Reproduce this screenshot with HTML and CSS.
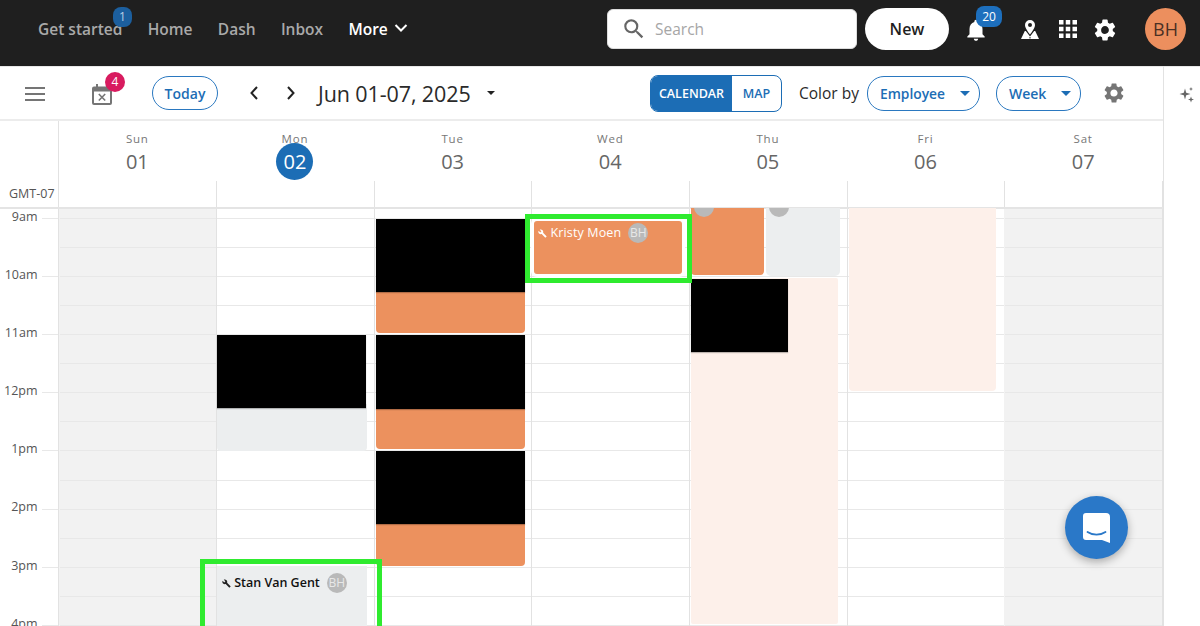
FILE: index.html
```html
<!DOCTYPE html>
<html lang="en">
<head>
<meta charset="utf-8">
<title>Calendar</title>
<link rel="stylesheet" href="styles.css">
</head>
<body>
<div class="app">
  <header class="topbar">
    <nav class="nav">
      <a class="nav-link first">Get started<span class="nav-badge">1</span></a>
      <a class="nav-link">Home</a>
      <a class="nav-link">Dash</a>
      <a class="nav-link">Inbox</a>
      <a class="nav-link more">More
        <svg class="more-chev" viewBox="0 0 14 10"><path d="M1.5 2 7 7.5 12.5 2" fill="none" stroke="#fff" stroke-width="2"/></svg>
      </a>
    </nav>
    <div class="top-right">
      <div class="search">
        <svg class="search-icon" viewBox="0 0 24 24"><path fill="#666" d="M15.5 14h-.79l-.28-.27A6.47 6.47 0 0 0 16 9.5 6.5 6.5 0 1 0 9.5 16c1.61 0 3.09-.59 4.23-1.57l.27.28v.79l5 4.99L20.49 19l-4.99-5zm-6 0C7.01 14 5 11.99 5 9.5S7.01 5 9.5 5 14 7.01 14 9.5 11.99 14 9.5 14z"/></svg>
        <span class="search-text">Search</span>
      </div>
      <button class="new-btn">New</button>
      <div class="bell">
        <svg class="bell-icon" viewBox="0 0 24 24"><path fill="#fff" d="M12 22c1.1 0 2-.9 2-2h-4c0 1.1.9 2 2 2zm6-6v-5c0-3.07-1.63-5.64-4.5-6.32V4c0-.83-.67-1.5-1.5-1.5s-1.5.67-1.5 1.500v.68C7.64 5.36 6 7.92 6 11v5l-2 2v1h16v-1l-2-2z"/></svg>
        <span class="bell-badge">20</span>
      </div>
      <svg class="pin-icon" viewBox="0 0 18 19"><path fill="#fff" fill-rule="evenodd" d="M9 0a5 5 0 0 0-5 5C4 8.500 9 14.500 9 14.500S14 8.500 14 5A5 5 0 0 0 9 0zm0 3a2 2 0 1 1 0 4 2 2 0 0 1 0-4z"/><path fill="#fff" d="M3.800 11 0 19h18l-3.800-8h-1L9 16.500 4.800 11z"/><path d="M9 17V19" stroke="#1f1f1f" stroke-width="1" stroke-dasharray="1 .5"/></svg>
      <svg class="grid-icon" viewBox="0 0 18 18"><path fill="#fff" d="M0 0h4.500v4.500H0zM6.750 0h4.500v4.500h-4.500zM13.500 0H18v4.500h-4.500zM0 6.750h4.500v4.500H0zM6.750 6.750h4.500v4.500h-4.500zM13.500 6.750H18v4.500h-4.500zM0 13.500h4.500V18H0zM6.750 13.500h4.500V18h-4.500zM13.500 13.500H18V18h-4.500z"/></svg>
      <svg class="gear-top" viewBox="0 0 24 24"><path fill="#fff" d="M19.140 12.940c.04-.3.060-.61.060-.94s-.020-.64-.070-.94l2.030-1.580a.49.49 0 0 0 .12-.61l-1.920-3.320a.49.49 0 0 0-.59-.22l-2.390.96c-.5-.38-1.030-.7-1.620-.94l-.36-2.540a.48.48 0 0 0-.48-.41h-3.840a.47.47 0 0 0-.47.410l-.36 2.540c-.59.24-1.130.57-1.620.94l-2.390-.96a.48.48 0 0 0-.59.22L2.740 8.870a.47.47 0 0 0 .12.61l2.030 1.580c-.05.3-.09.63-.09.94s.02.640.07.940l-2.030 1.580a.49.49 0 0 0-.12.610l1.920 3.320c.12.220.37.290.59.220l2.390-.96c.5.380 1.030.7 1.620.94l.36 2.540c.05.24.24.41.480.41h3.840c.24 0 .44-.17.470-.41l.36-2.540c.59-.24 1.130-.56 1.620-.94l2.390.96c.22.080.47 0 .59-.22l1.920-3.320a.47.47 0 0 0-.12-.61zM12 15.600A3.610 3.610 0 0 1 8.400 12c0-1.980 1.620-3.600 3.600-3.600s3.600 1.620 3.600 3.600-1.620 3.600-3.600 3.600z"/></svg>
      <div class="avatar">BH</div>
    </div>
  </header>

  <div class="workspace">
    <main class="calendar">
      <div class="toolbar">
        <svg class="menu-icon" viewBox="0 0 20 14"><path fill="#757575" d="M0 0h20v2H0zM0 6h20v2H0zM0 12h20v2H0z"/></svg>
        <div class="unscheduled">
          <svg class="cal-icon" viewBox="0 0 20 21"><path fill="#757575" fill-rule="evenodd" d="M4 0h2v2.500h8V0h2v2.500h2a2 2 0 0 1 2 2V19a2 2 0 0 1-2 2H2a2 2 0 0 1-2-2V4.500a2 2 0 0 1 2-2h2zM2 7.500V19h16V7.500z"/><path d="M6.800 10 13.200 16.500M13.200 10 6.800 16.500" stroke="#757575" stroke-width="1.600"/></svg>
          <span class="count-badge">4</span>
        </div>
        <button class="pill today">Today</button>
        <svg class="chev chev-left" viewBox="0 0 10 16"><path d="M8 2 2.500 8 8 14" fill="none" stroke="#222" stroke-width="2"/></svg>
        <svg class="chev chev-right" viewBox="0 0 10 16"><path d="M2 2l5.500 6L2 14" fill="none" stroke="#222" stroke-width="2"/></svg>
        <span class="range">Jun 01-07, 2025</span>
        <span class="caret dark"></span>
        <div class="tools-right">
          <div class="segment"><span class="seg-on">CALENDAR</span><span class="seg-off">MAP</span></div>
          <span class="color-by">Color by</span>
          <button class="pill select employee">Employee<span class="caret"></span></button>
          <button class="pill select week">Week<span class="caret"></span></button>
          <svg class="gear-tool" viewBox="0 0 24 24"><path fill="#757575" d="M19.140 12.940c.04-.3.060-.61.060-.94s-.020-.64-.070-.94l2.030-1.580a.49.49 0 0 0 .12-.61l-1.920-3.320a.49.49 0 0 0-.59-.22l-2.390.96c-.5-.38-1.030-.7-1.620-.94l-.36-2.540a.48.48 0 0 0-.48-.41h-3.840a.47.47 0 0 0-.47.410l-.36 2.540c-.59.24-1.130.57-1.620.94l-2.390-.96a.48.48 0 0 0-.59.22L2.740 8.870a.47.47 0 0 0 .12.61l2.030 1.580c-.05.3-.09.63-.09.94s.02.640.07.940l-2.030 1.580a.49.49 0 0 0-.12.610l1.920 3.320c.12.220.37.290.59.220l2.390-.96c.5.380 1.030.7 1.620.94l.36 2.540c.05.24.24.41.480.41h3.840c.24 0 .44-.17.470-.41l.36-2.540c.59-.24 1.130-.56 1.620-.94l2.390.96c.22.080.47 0 .59-.22l1.920-3.320a.47.47 0 0 0-.12-.61zM12 15.600A3.610 3.610 0 0 1 8.400 12c0-1.980 1.620-3.600 3.600-3.600s3.600 1.620 3.600 3.600-1.620 3.600-3.600 3.600z"/></svg>
        </div>
      </div>

      <div class="head-row">
        <div class="gutter-head">GMT-07</div>
        <div class="day-head"><span class="dow">Sun</span><span class="num">01</span></div>
        <div class="day-head"><span class="dow">Mon</span><span class="num today-num">02</span></div>
        <div class="day-head"><span class="dow">Tue</span><span class="num">03</span></div>
        <div class="day-head"><span class="dow">Wed</span><span class="num">04</span></div>
        <div class="day-head"><span class="dow">Thu</span><span class="num">05</span></div>
        <div class="day-head"><span class="dow">Fri</span><span class="num">06</span></div>
        <div class="day-head"><span class="dow">Sat</span><span class="num">07</span></div>
      </div>

      <div class="body-row">
        <div class="gutter">
          <span class="hour">9am</span><span class="hour">10am</span><span class="hour">11am</span><span class="hour">12pm</span><span class="hour">1pm</span><span class="hour">2pm</span><span class="hour">3pm</span><span class="hour">4pm</span>
        </div>
        <div class="day weekend"></div>
        <div class="day">
          <div class="ev black mon-a"></div>
          <div class="ev gray mon-b"></div>
          <div class="ev gray mon-c">
            <svg class="wrench" viewBox="0 0 24 24"><path fill="#222" d="M22.700 19 13.600 9.900c.9-2.300.4-5-1.500-6.900-2-2-5-2.400-7.400-1.300L9 6 6 9 1.600 4.700C.4 7.100.9 10.100 2.900 12.100c1.900 1.900 4.600 2.400 6.900 1.500l9.100 9.100c.4.400 1 .4 1.400 0l2.300-2.300c.5-.4.5-1.100.1-1.400z"/></svg>
            <span class="ev-name dark-name">Stan Van Gent</span><span class="ev-avatar">BH</span>
          </div>
        </div>
        <div class="day">
          <div class="ev orange tue-a"></div><div class="ev black tue-a1"></div>
          <div class="ev orange tue-b"></div><div class="ev black tue-b1"></div>
          <div class="ev orange tue-c"></div><div class="ev black tue-c1"></div>
        </div>
        <div class="day">
          <div class="ev orange wed-a">
            <svg class="wrench" viewBox="0 0 24 24"><path fill="#fff" d="M22.700 19 13.600 9.900c.9-2.300.4-5-1.500-6.900-2-2-5-2.400-7.400-1.300L9 6 6 9 1.600 4.700C.4 7.100.9 10.100 2.900 12.100c1.900 1.900 4.600 2.400 6.900 1.500l9.100 9.100c.4.400 1 .4 1.400 0l2.300-2.300c.5-.4.500-1.100.1-1.400z"/></svg>
            <span class="ev-name">Kristy Moen</span><span class="ev-avatar">BH</span>
          </div>
        </div>
        <div class="day">
          <div class="ev orange thu-a"><span class="cut-avatar"></span></div>
          <div class="ev gray thu-b"><span class="cut-avatar"></span></div>
          <div class="ev peach thu-c"></div>
          <div class="ev black thu-d"></div>
        </div>
        <div class="day">
          <div class="ev peach fri-a"></div>
        </div>
        <div class="day weekend"></div>
        <div class="mark mark-wed"></div>
        <div class="mark mark-mon"></div>
      </div>
    </main>
    <aside class="side">
      <svg class="spark" viewBox="0 0 16 16"><path fill="#666" d="M6 1.500 7.200 5.800 11.500 7 7.200 8.200 6 12.500 4.800 8.200.5 7 4.800 5.800zM12 0l.6 1.400L14 2l-1.400.6L12 4l-.6-1.400L10 2l1.400-.6zM12 9.500l.8 2.200 2.200.8-2.200.8L12 15.500l-.8-2.200L9 12.500l2.200-.8z"/></svg>
    </aside>
  </div>

  <button class="fab" aria-label="Chat">
    <svg viewBox="0 0 28 32" class="fab-icon"><path fill="#fff" d="M3 1h20a4 4 0 0 1 4 4v26l-8-3H3a3 3 0 0 1-3-3V4a3 3 0 0 1 3-3z"/><path d="M4.500 20c5 3.500 13 3.500 18 0" fill="none" stroke="#2a78c8" stroke-width="1.800" stroke-linecap="round"/></svg>
  </button>
</div>
</body>
</html>
```
FILE: styles.css
```css
* { box-sizing: border-box; }
html, body { margin: 0; height: 100%; overflow: hidden; }
body { font-family: "Open Sans", "Liberation Sans", sans-serif; background: #fff; color: #222; }
button { font-family: inherit; cursor: pointer; }
svg { display: block; flex: none; }

.app { position: relative; width: 1200px; height: 626px; overflow: hidden; display: flex; flex-direction: column; }

/* Top bar */
.topbar { height: 66px; flex: none; background: #1f1f1f; display: flex; justify-content: space-between; align-items: flex-start; }
.nav { display: flex; padding: 19px 0 0 38px; gap: 25.300px; }
.nav-link { position: relative; font-size: 15.500px; line-height: 20px; font-weight: 600; color: #a9a9a9; display: flex; align-items: center; }
.more { color: #fff; font-weight: 600; }
.more-chev { width: 14px; height: 10px; margin: -3px 0 0 6px; }
.nav-badge { position: absolute; left: 75px; top: -12px; width: 19px; height: 20px; border-radius: 8px; background: #1c5f9e; color: #b9cfe6; font-size: 12px; font-weight: 400; line-height: 20px; text-align: center; }

.top-right { display: flex; align-items: center; padding-top: 8px; margin-right: 14px; }
.search { width: 250px; height: 40px; background: #fff; border-radius: 6px; border: 1px solid #ddd; display: flex; align-items: center; padding-left: 13px; }
.search-icon { width: 26px; height: 26px; }
.search-text { margin-left: 8px; font-size: 15.500px; color: #a6a6a6; }
.new-btn { width: 84px; height: 42px; margin-left: 8px; border: 0; border-radius: 21px; background: #fff; font-size: 16px; font-weight: 600; color: #1f1f1f; }
.bell { position: relative; margin-left: 14px; width: 26px; height: 42px; display: flex; align-items: center; }
.bell-icon { width: 26px; height: 26px; margin-top: 2px; }
.bell-badge { position: absolute; left: 13px; top: -2px; width: 26px; height: 21px; border-radius: 8px; background: #1d6fbd; color: #fff; font-size: 12px; line-height: 21px; text-align: center; }
.pin-icon { width: 18px; height: 19px; margin-left: 32px; }
.grid-icon { width: 18px; height: 18px; margin-left: 20px; }
.gear-top { width: 26px; height: 26px; margin: 1px 0 0 15px; }
.avatar { width: 41px; height: 42px; margin-left: 27px; border-radius: 50%; background: #ec8f5e; color: #4a3024; font-size: 18px; line-height: 42px; text-align: center; }

/* Workspace */
.workspace { flex: 1; display: flex; min-height: 0; }
.calendar { width: 1164px; flex: none; display: flex; flex-direction: column; border-right: 1px solid #e2e2e2; }
.side { flex: 1; display: flex; padding: 20px 0 0 15px; border-top: 1px solid #e8e8e8; }
.spark { width: 16px; height: 16px; }

/* Toolbar */
.toolbar { height: 55px; flex: none; display: flex; align-items: center; border-top: 1px solid #e8e8e8; border-bottom: 2px solid #ececec; padding-left: 25px; }
.menu-icon { width: 20px; height: 14px; margin-top: 1px; }
.unscheduled { position: relative; margin-left: 47px; width: 20px; height: 21px; margin-top: 2px; }
.cal-icon { width: 20px; height: 21px; }
.count-badge { position: absolute; left: 13px; top: -12px; width: 20px; height: 20px; border-radius: 50%; background: #d81b5f; color: #fff; font-size: 12px; line-height: 20px; text-align: center; }
.pill { height: 34px; border: 1px solid #2a78c0; border-radius: 17px; background: #fff; color: #1c6db5; font-size: 14px; font-weight: 600; padding: 0; }
.today { width: 66px; margin-left: 40px; }
.chev { width: 10px; height: 16px; }
.chev-left { margin-left: 31px; }
.chev-right { margin-left: 27px; }
.range { margin-left: 22px; font-size: 21.500px; color: #2a2a2a; letter-spacing: -.1px; white-space: nowrap; }
.caret { display: inline-block; width: 0; height: 0; border-left: 5px solid transparent; border-right: 5px solid transparent; border-top: 5px solid #1c6db5; }
.caret.dark { border-top-color: #222; margin-left: 16px; border-left-width: 4.500px; border-right-width: 4.500px; border-top-width: 4.500px; }
.tools-right { margin-left: auto; display: flex; align-items: center; margin-right: 37px; }
.segment { width: 132px; height: 37px; border: 1px solid #1c6db5; border-radius: 8px; overflow: hidden; display: flex; font-size: 12.500px; font-weight: 600; line-height: 35px; text-align: center; }
.seg-on { width: 81px; background: #1c6db5; color: #fff; }
.seg-off { flex: 1; color: #1c6db5; }
.color-by { margin-left: 17px; width: 60px; font-size: 15.500px; color: #2a2a2a; white-space: nowrap; }
.select { height: 35px; display: flex; align-items: center; justify-content: space-between; padding: 0 9px 0 12px; }
.employee { width: 113px; margin-left: 8px; font-size: 13.800px; }
.week { width: 85px; margin-left: 16px; }
.gear-tool { width: 24px; height: 24px; margin-left: 21px; }

/* Header row */
.head-row { height: 87px; flex: none; display: grid; grid-template-columns: 59.500px repeat(7, 1fr); border-bottom: 1px solid #e4e4e4; }
.gutter-head { margin-right: 1px; border-right: 1px solid #e2e2e2; font-size: 12.500px; color: #555; padding: 64px 0 0 9px; line-height: 18px; white-space: nowrap; }
.day-head { position: relative; display: flex; flex-direction: column; align-items: center; color: #666; padding-right: 2px; }
.day-head::after { content: ""; position: absolute; right: 0; top: 60px; bottom: 0; width: 1px; background: #e2e2e2; }
.dow { font-size: 11.500px; line-height: 14px; margin-top: 11px; letter-spacing: .8px; color: #777; }
.num { width: 37px; height: 37px; font-size: 20px; line-height: 37px; text-align: center; color: #666; margin-top: -3px; border-radius: 50%; }
.today-num { background: #1c6db5; color: #fff; }

/* Body */
.body-row { position: relative; flex: 1; min-height: 0; overflow: hidden; display: grid; grid-template-columns: 59.500px repeat(7, 1fr); }
.body-row::before { content: ""; position: absolute; left: 0; right: 0; top: 0; height: 1px; background: #e4e4e4; z-index: 2; }
.gutter { position: relative; margin-right: 1px; border-right: 1px solid #e2e2e2; display: flex; flex-direction: column; align-items: flex-end; padding-right: 20px; background: linear-gradient(#e8e8e8, #e8e8e8) 42px 10px / 17px 1px no-repeat, repeating-linear-gradient(to bottom, transparent 0, transparent 57.100px, #e8e8e8 57.100px, #e8e8e8 58.100px) 42px 11px / 17px 100% no-repeat; }
.hour { height: 58.100px; font-size: 12.500px; line-height: 18px; color: #555; flex: none; white-space: nowrap; }
.day { position: relative; border-right: 1px solid #e2e2e2; background: repeating-linear-gradient(to bottom, transparent 0, transparent 28.050px, #e8e8e8 28.050px, #e8e8e8 29.050px) 0 -18px; background-size: 100% 100%; }
.day:last-of-type { border-right: 0; }
.weekend { background-color: #f2f2f2; box-shadow: -1px 0 0 #f2f2f2; }

/* Events */
.ev { position: absolute; border-radius: 0 0 4px 4px; }
.black { background: #000; border-radius: 0; box-shadow: 0 1px 1px rgba(0,0,0,.25); }
.orange { background: #ec915e; }
.gray { background: #eceeef; }
.peach { background: #fdf0ea; }

.mon-a { left: 0; top: 127px; width: 149px; height: 73px; z-index: 1; }
.mon-b { left: 0; top: 196px; width: 150px; height: 47px; }
.mon-c { left: 0; top: 358px; width: 150px; height: 70px; }
.tue-a { left: 1px; top: 11px; width: 149px; height: 114px; }
.tue-a1 { left: 1px; top: 11px; width: 149px; height: 73px; }
.tue-b { left: 1px; top: 127px; width: 149px; height: 114px; }
.tue-b1 { left: 1px; top: 127px; width: 149px; height: 74px; }
.tue-c { left: 1px; top: 243px; width: 149px; height: 115px; }
.tue-c1 { left: 1px; top: 243px; width: 149px; height: 73px; }
.wed-a { left: 2px; top: 13px; width: 148px; height: 53px; border-radius: 3px; display: flex; align-items: flex-start; padding: 2px 0 0 4px; box-shadow: 0 0 0 3px #fff; }
.thu-a { left: 1px; top: 0; width: 73px; height: 67px; overflow: hidden; z-index: 3; }
.thu-b { left: 76px; top: 0; width: 74px; height: 68px; overflow: hidden; border-radius: 0 0 5px 5px; z-index: 3; }
.thu-c { left: 1px; top: 70px; width: 147px; height: 346px; border-radius: 2px; }
.thu-d { left: 1px; top: 71px; width: 97px; height: 73px; }
.fri-a { left: 1px; top: 0; width: 147px; height: 183px; z-index: 3; }

.mon-c { display: flex; align-items: flex-start; padding: 7px 0 0 5px; border-radius: 0; }
.wrench { width: 9px; height: 9px; margin-top: 6px; }
.ev-name { margin-left: 3px; font-size: 12.500px; line-height: 20px; font-weight: 500; color: #fff; white-space: nowrap; letter-spacing: .15px; }
.dark-name { color: #111; font-weight: 600; letter-spacing: 0; }
.ev-avatar { width: 20px; height: 20px; margin-left: 7px; border-radius: 50%; background: #b9b9b9; color: #e8e8e8; font-size: 12px; line-height: 20px; text-align: center; }
.cut-avatar { position: absolute; left: 3px; top: -11px; width: 20px; height: 20px; border-radius: 50%; background: #b9b9b9; }

/* Highlight frames */
.mark { position: absolute; border: 5px solid #2feb2f; z-index: 4; pointer-events: none; }
.mark-wed { left: 524.500px; top: 5.500px; width: 167px; height: 69px; }
.mark-mon { left: 199.500px; top: 350.500px; width: 182.500px; height: 90px; }

/* Chat */
.fab { position: absolute; left: 1065px; top: 496px; width: 63px; height: 63px; border: 0; border-radius: 50%; background: #2a78c8; box-shadow: 0 3px 8px rgba(0,0,0,.3); display: flex; align-items: center; justify-content: center; padding: 0; z-index: 5; }
.fab-icon { width: 28px; height: 32px; margin-top: 1px; }
```
